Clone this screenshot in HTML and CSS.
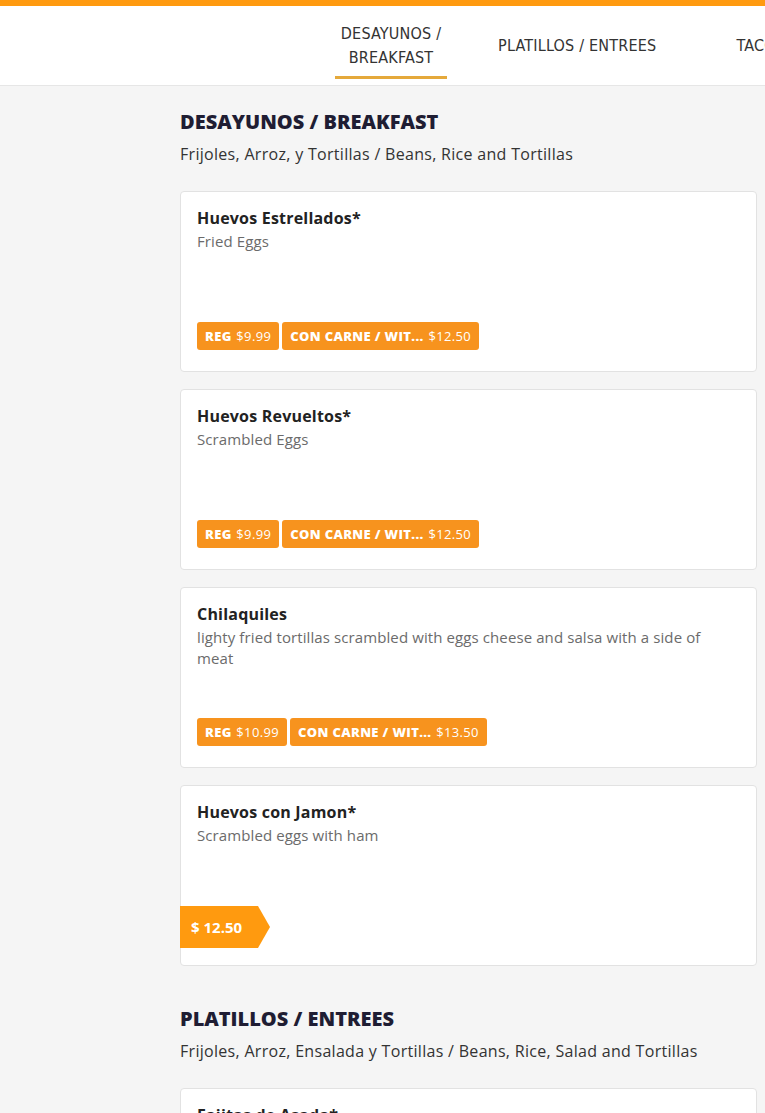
FILE: index.html
```html
<!DOCTYPE html>
<html lang="es">
<head>
<meta charset="utf-8">
<title>Menu</title>
<link rel="stylesheet" href="styles.css">
</head>
<body>
<div class="topbar"></div>
<header class="header">
  <nav class="tabs">
    <a class="tab active">DESAYUNOS /<br>BREAKFAST</a>
    <a class="tab">PLATILLOS / ENTREES</a>
    <a class="tab">TACOS</a>
  </nav>
</header>
<main class="main">
  <section class="section">
    <h2 class="sec-title">DESAYUNOS / BREAKFAST</h2>
    <p class="sec-sub">Frijoles, Arroz, y Tortillas / Beans, Rice and Tortillas</p>
    <div class="cards">
      <article class="card">
        <h3 class="item-title">Huevos Estrellados*</h3>
        <p class="item-desc">Fried Eggs</p>
        <div class="prices">
          <span class="tag"><b>REG</b> $9.99</span>
          <span class="tag"><b>CON CARNE / WIT...</b> $12.50</span>
        </div>
      </article>
      <article class="card">
        <h3 class="item-title">Huevos Revueltos*</h3>
        <p class="item-desc">Scrambled Eggs</p>
        <div class="prices">
          <span class="tag"><b>REG</b> $9.99</span>
          <span class="tag"><b>CON CARNE / WIT...</b> $12.50</span>
        </div>
      </article>
      <article class="card">
        <h3 class="item-title">Chilaquiles</h3>
        <p class="item-desc narrow">lighty fried tortillas scrambled with eggs cheese and salsa with a side of meat</p>
        <div class="prices">
          <span class="tag"><b>REG</b> $10.99</span>
          <span class="tag"><b>CON CARNE / WIT...</b> $13.50</span>
        </div>
      </article>
      <article class="card">
        <h3 class="item-title">Huevos con Jamon*</h3>
        <p class="item-desc">Scrambled eggs with ham</p>
        <div class="prices single">
          <span class="flag">$ 12.50</span>
        </div>
      </article>
    </div>
  </section>
  <section class="section">
    <h2 class="sec-title">PLATILLOS / ENTREES</h2>
    <p class="sec-sub">Frijoles, Arroz, Ensalada y Tortillas / Beans, Rice, Salad and Tortillas</p>
    <div class="cards">
      <article class="card">
        <h3 class="item-title">Fajitas de Asada*</h3>
        <p class="item-desc">Beef fajitas</p>
      </article>
    </div>
  </section>
</main>
</body>
</html>
```
FILE: styles.css
```css
* { box-sizing: border-box; }
html, body { margin: 0; padding: 0; }
body {
  background: #f5f5f5;
  font-family: "Open Sans", "Noto Sans", sans-serif;
  color: #222;
  overflow: hidden;
  height: 1113px;
}
.topbar { height: 6px; background: #ff9a0f; }
.header {
  height: 80px;
  background: #fff;
  border-bottom: 1px solid #e6e6e6;
  overflow: hidden;
}
.tabs {
  display: flex;
  align-items: stretch;
  height: 100%;
  padding-left: 335px;
  white-space: nowrap;
}
.tab {
  flex-shrink: 0;
  display: flex;
  align-items: center;
  justify-content: center;
  text-align: center;
  font-family: "DejaVu Sans Condensed", "Liberation Sans Narrow", sans-serif;
  font-size: 16px;
  letter-spacing: 0.2px;
  line-height: 24px;
  color: #333;
  text-decoration: none;
}
.tab:nth-child(1) { width: 112px; border-bottom: 3px solid #e5a93b; margin-bottom: 6px; padding-top: 9px; }
.tab:nth-child(2) { margin-left: 51px; }
.tab:nth-child(3) { margin-left: 80px; }
.main { padding: 21px 8px 0 180px; }
.section { margin-bottom: 38px; }
.sec-title {
  margin: 0;
  font-size: 20px;
  line-height: 30px;
  font-weight: 800;
  color: #1f1d33;
}
.sec-sub {
  margin: 5px 0 0;
  font-size: 16px;
  line-height: 24px;
  letter-spacing: 0.3px;
  color: #333;
}
.cards {
  margin-top: 25px;
  display: flex;
  flex-direction: column;
  gap: 17px;
}
.card {
  background: #fff;
  border: 1px solid #e2e2e2;
  border-radius: 4px;
  padding: 17px 16px 17px 16px;
  min-height: 181px;
  display: flex;
  flex-direction: column;
}
.item-title {
  margin: 0;
  font-size: 16px;
  line-height: 18px;
  font-weight: 700;
  letter-spacing: 0.2px;
  color: #222;
}
.item-desc {
  margin: 4px 0 0;
  font-size: 15px;
  line-height: 21px;
  letter-spacing: 0.1px;
  color: #6b6b6b;
}
.item-desc.narrow { max-width: 520px; }
.prices {
  margin-top: auto;
  display: flex;
  gap: 3px;
  padding-bottom: 4px;
}
.tag {
  background: #f7931e;
  color: #fff;
  font-size: 13px;
  line-height: 28px;
  height: 28px;
  padding: 0 8px;
  border-radius: 3px;
  letter-spacing: 0.35px;
}
.tag b { font-weight: 800; margin-right: 1px; }
.prices.single { padding-bottom: 0; }
.flag {
  margin-left: -17px;
  height: 42px;
  line-height: 42px;
  width: 90px;
  padding-left: 11px;
  background: #ff9a0f;
  color: #fff;
  font-weight: 700;
  font-size: 15px;
  clip-path: polygon(0 0, 78px 0, 90px 50%, 78px 100%, 0 100%);
}
```
